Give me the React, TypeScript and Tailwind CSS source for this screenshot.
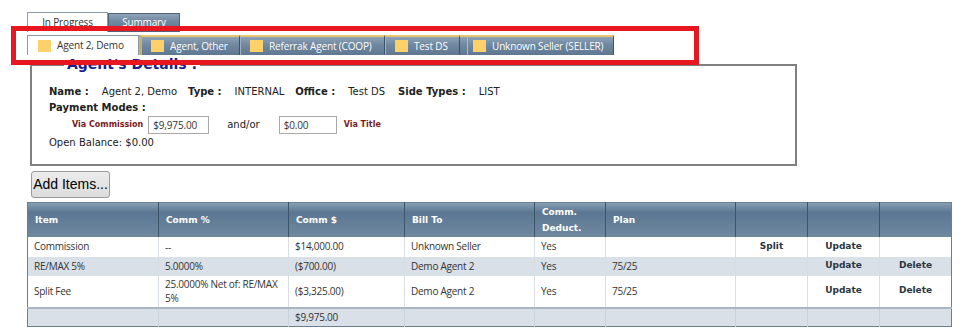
import React from "react";

const verdana = { fontFamily: '"DejaVu Sans", Verdana, sans-serif' };
const segoe = { fontFamily: '"Open Sans", "Noto Sans", sans-serif' };

function Sq() {
  return <span className="inline-block w-[13px] h-[12px] bg-[#fdd06a] mr-[6px] shrink-0" />;
}

const agentTabs = [
  { label: "Agent, Other", w: "w-[99px]" },
  { label: "Referrak Agent (COOP)", w: "w-[145px]" },
  { label: "Test DS", w: "w-[75px]" },
];

const cols = [131, 130, 116, 130, 71, 130, 72, 72, 72];

type Row = {
  item: string;
  pct: React.ReactNode;
  amt: string;
  bill: string;
  ded: string;
  plan: string;
  split: string;
  upd: string;
  del: string;
  alt?: boolean;
  h: string;
};

const rows: Row[] = [
  { item: "Commission", pct: "--", amt: "$14,000.00", bill: "Unknown Seller", ded: "Yes", plan: "", split: "Split", upd: "Update", del: "", h: "h-[20px]" },
  { item: "RE/MAX 5%", pct: "5.0000%", amt: "($700.00)", bill: "Demo Agent 2", ded: "Yes", plan: "75/25", split: "", upd: "Update", del: "Delete", alt: true, h: "h-[19px]" },
  { item: "Split Fee", pct: "25.0000% Net of: RE/MAX 5%", amt: "($3,325.00)", bill: "Demo Agent 2", ded: "Yes", plan: "75/25", split: "", upd: "Update", del: "Delete", h: "h-[32px]" },
];

export default function App() {
  const tabGrad = "bg-[linear-gradient(to_bottom,#8ea3b8_0%,#6f879f_45%,#5f7891_100%)]";
  const headGrad = "bg-[linear-gradient(to_bottom,#879fb5_0%,#5b7690_28%,#607b95_45%,#7089a0_100%)]";
  return (
    <div className="relative w-[965px] h-[332px] bg-white overflow-hidden text-[#222]">
      {/* top tabs */}
      <div className="flex items-end ml-[27px] pt-[12px] h-[32px]" style={segoe}>
        <div className="w-[81px] h-[20px] border border-b-0 border-[#8a9aab] bg-white text-[10px] tracking-[-0.15px] text-[#333] flex items-center justify-center">
          In Progress
        </div>
        <div className={`w-[72px] h-[19px] border border-[#4f6479] ${tabGrad} text-[10px] tracking-[-0.15px] text-white flex items-center justify-center`}>
          Summary
        </div>
      </div>

      {/* agent tabs */}
      <div className="flex ml-[27px] mt-[3px] h-[20px] text-[10px] tracking-[-0.15px]" style={segoe}>
        <div className="w-[112px] h-[20px] border border-b-0 border-[#8a9aab] bg-white flex items-center pl-[10px] text-[#333]">
          <Sq />
          Agent 2, Demo
        </div>
        <div className="w-[2px] h-[20px] bg-[#c8b26a]" />
        {agentTabs.map((t) => (
          <div
            key={t.label}
            className={`${t.w} h-[20px] border-t-2 border-t-[#e6c66e] border-r border-r-[#3d5268] border-l border-l-[#9fb1c3] ${tabGrad} flex items-center pl-[9px] text-white`}
          >
            <Sq />
            {t.label}
          </div>
        ))}
        <div className={`w-[8px] h-[20px] border-t-2 border-t-[#e6c66e] border-r border-r-[#d8b860] ${tabGrad}`} />
        <div className={`w-[146px] h-[20px] border-t-2 border-t-[#e6c66e] border-r border-r-[#3d5268] ${tabGrad} flex items-center pl-[5px] text-white`}>
          <Sq />
          Unknown Seller (SELLER)
        </div>
      </div>

      {/* agent details */}
      <fieldset className="ml-[30px] -mt-[1px] w-[767px] h-[112px] border-2 border-[#808080] pl-[17px] pt-[8px]" style={verdana}>
        <legend className="ml-[15px] px-[3px] text-[14px] font-bold text-[#1a1f8c]">Agent's Details :</legend>
        <div className="flex items-center text-[10px] h-[16px]">
          <span className="font-bold">Name :</span>
          <span className="ml-[13px]">Agent 2, Demo</span>
          <span className="ml-[11px] font-bold">Type :</span>
          <span className="ml-[13px]">INTERNAL</span>
          <span className="ml-[11px] font-bold">Office :</span>
          <span className="ml-[13px]">Test DS</span>
          <span className="ml-[13px] font-bold">Side Types :</span>
          <span className="ml-[13px]">LIST</span>
        </div>
        <div className="text-[10px] font-bold h-[16px] flex items-center">Payment Modes :</div>
        <div className="flex items-center h-[19px]">
          <span className="ml-[23px] text-[8px] font-bold text-[#7a1a1a]">Via Commission</span>
          <input
            readOnly
            value="$9,975.00"
            className="ml-[5px] w-[61px] h-[18px] border border-[#a9a9a9] px-[4px] text-[10px] tracking-[-0.15px] text-[#333] outline-none"
            style={segoe}
          />
          <span className="ml-[18px] text-[10px]">and/or</span>
          <input
            readOnly
            value="$0.00"
            className="ml-[19px] w-[58px] h-[18px] border border-[#a9a9a9] px-[4px] text-[10px] tracking-[-0.15px] text-[#333] outline-none"
            style={segoe}
          />
          <span className="ml-[7px] text-[8px] font-bold text-[#7a1a1a]">Via Title</span>
        </div>
        <div className="text-[10px] h-[17px] flex items-center">Open Balance: $0.00</div>
      </fieldset>

      {/* add items */}
      <div className="ml-[31px] mt-[5px]">
        <button
          className="w-[79px] h-[27px] rounded-[3px] border border-[#9a9a9a] bg-[linear-gradient(to_bottom,#ececec,#dcdcdc)] text-[14px] text-black"
          style={{ fontFamily: '"Liberation Sans", Arial, sans-serif' }}
        >
          Add Items...
        </button>
      </div>

      {/* table */}
      <table className="ml-[27px] mt-[4px] border-collapse border border-[#6b7f93] table-fixed w-[925px]" style={segoe}>
        <colgroup>
          {cols.map((w, i) => (
            <col key={i} style={{ width: w }} />
          ))}
        </colgroup>
        <thead>
          <tr className={`${headGrad} h-[34px]`}>
            {["Item", "Comm %", "Comm $", "Bill To", "Comm.\nDeduct.", "Plan", "", "", ""].map((h, i) => (
              <th
                key={i}
                className="border-l border-[#3e5469] first:border-l-0 text-left align-middle px-[7px] text-[9px] leading-[16px] font-bold text-white whitespace-pre-line"
                style={verdana}
              >
                {h}
              </th>
            ))}
          </tr>
        </thead>
        <tbody>
          {rows.map((r, idx) => (
            <tr key={idx} className={`${r.h} ${r.alt ? "bg-[#dae0e7]" : "bg-white"} text-[10px] tracking-[-0.25px] text-[#333]`}>
              <td className="px-[6px] align-middle">{r.item}</td>
              <td className="border-l border-[#d9dee4] px-[6px] align-middle leading-[14px]">{r.pct}</td>
              <td className="border-l border-[#d9dee4] px-[6px] align-middle">{r.amt}</td>
              <td className="border-l border-[#d9dee4] px-[6px] align-middle">{r.bill}</td>
              <td className="border-l border-[#d9dee4] px-[6px] align-middle">{r.ded}</td>
              <td className="border-l border-[#d9dee4] px-[6px] align-middle">{r.plan}</td>
              {[r.split, r.upd, r.del].map((a, j) => (
                <td key={j} className="border-l border-[#d9dee4] text-center align-middle text-[9px] tracking-normal font-bold text-[#2b3540]" style={verdana}>
                  {a}
                </td>
              ))}
            </tr>
          ))}
          <tr className="h-[19px] bg-[#dae0e7] border-t-2 border-[#aab6c3] text-[10px] tracking-[-0.25px] text-[#333]">
            <td className="px-[6px]" />
            <td className="border-l border-[#cdd3da]" />
            <td className="border-l border-[#cdd3da] px-[6px]">$9,975.00</td>
            <td className="border-l border-[#cdd3da]" />
            <td className="border-l border-[#cdd3da]" />
            <td className="border-l border-[#cdd3da]" />
            <td className="border-l border-[#cdd3da]" />
            <td className="border-l border-[#cdd3da]" />
            <td className="border-l border-[#cdd3da]" />
          </tr>
        </tbody>
      </table>

      {/* red annotation rectangle */}
      <div className="absolute left-[11px] top-[26px] w-[688px] h-[39px] border-[5px] border-[#e8161e] pointer-events-none" />
    </div>
  );
}
